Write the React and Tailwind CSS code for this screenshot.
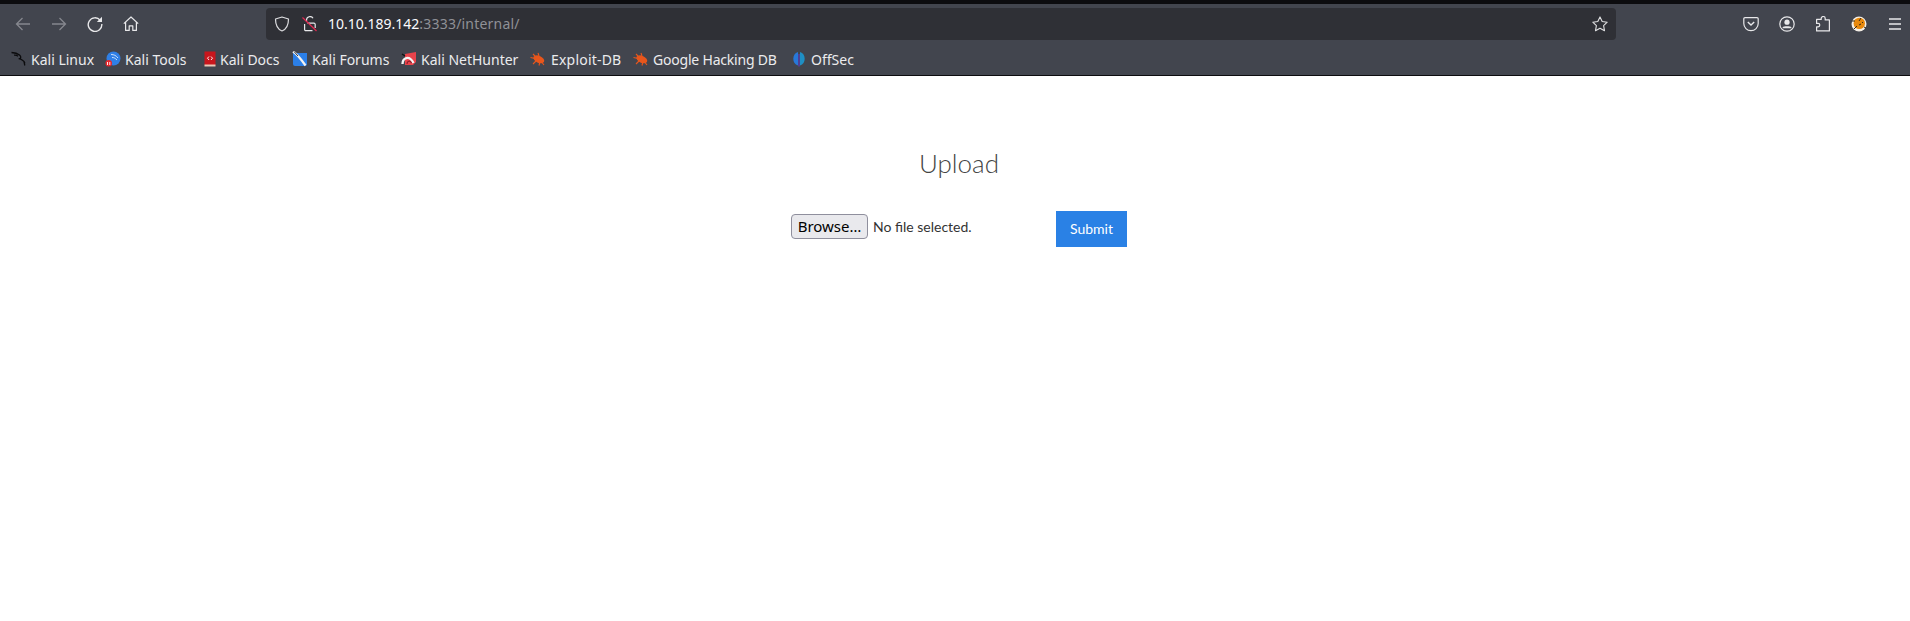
import React from 'react';

function Back({ className }) {
  return (
    <svg width="16" height="16" viewBox="0 0 16 16" fill="none" stroke="currentColor" strokeWidth="1.3" className={className}>
      <path d="M15 8H1.5M7.5 2 1.500 8l6 6" />
    </svg>
  );
}

function Reload() {
  return (
    <svg width="16" height="16" viewBox="0 0 16 16" fill="none" stroke="currentColor" strokeWidth="1.4" className="text-[#e8e8ea]">
      <path d="M13.2 4.2A6.800 6.800 0 1 0 14.800 8" />
      <path d="M15 .8V6h-5.200z" fill="currentColor" stroke="none" />
    </svg>
  );
}

function Home() {
  return (
    <svg width="16" height="16" viewBox="0 0 16 16" fill="none" stroke="currentColor" strokeWidth="1.2" className="text-[#e8e8ea]">
      <path d="M.8 7.600 8 1l7.200 6.600M2.600 6.200v8.200h3.600V9.800h3.600v4.600h3.600V6.200" strokeLinejoin="round" />
    </svg>
  );
}

function Shield() {
  return (
    <svg width="16" height="16" viewBox="0 0 16 16" fill="none" stroke="currentColor" strokeWidth="1.2" className="text-[#dcdcdf]">
      <path d="M8 1 1.500 3c0 6 1.500 10 6.500 12 5-2 6.500-6 6.500-12z" strokeLinejoin="round" />
    </svg>
  );
}

function BrokenLock() {
  return (
    <svg width="16" height="16" viewBox="0 0 16 16" fill="none" className="text-[#e8e8ea]">
      <path d="M4.500 5.500V4a3.500 3.500 0 0 1 6.500-1.700" stroke="currentColor" strokeWidth="1.200" />
      <path d="M5.500 7.200H12a1.200 1.200 0 0 1 1.200 1.200V12M10.500 14.600H3.800a1.200 1.200 0 0 1-1.200-1.200V8" stroke="currentColor" strokeWidth="1.200" />
      <path d="M.5 1.500 14.500 15" stroke="#e22850" strokeWidth="1.200" />
    </svg>
  );
}

function Star() {
  return (
    <svg width="16" height="16" viewBox="0 0 16 16" fill="none" stroke="currentColor" strokeWidth="1.100" className="text-[#e0e0e2]">
      <path d="m8 .9 2.200 4.600 5 .7-3.600 3.500.9 5L8 12.300l-4.500 2.400.9-5L.8 6.200l5-.7z" strokeLinejoin="round" />
    </svg>
  );
}

function Pocket() {
  return (
    <svg width="16" height="16" viewBox="0 0 16 16" fill="none" stroke="currentColor" strokeWidth="1.200" className="text-[#e8e8ea]">
      <path d="M2 1.600h12a1.200 1.200 0 0 1 1.200 1.200v4.700a7.200 7.200 0 0 1-14.400 0V2.800A1.200 1.200 0 0 1 2 1.600z" />
      <path d="m4.800 6 3.200 3.100L11.200 6" strokeWidth="1.400" />
    </svg>
  );
}

function Account() {
  return (
    <svg width="16" height="16" viewBox="0 0 16 16" fill="none" className="text-[#e8e8ea]">
      <circle cx="8" cy="8" r="7.200" stroke="currentColor" strokeWidth="1.200" />
      <circle cx="8" cy="6.200" r="2.600" fill="currentColor" />
      <path d="M3.600 11.200c1-1.400 7.800-1.400 8.800 0v1H3.600z" fill="currentColor" />
    </svg>
  );
}

function Puzzle() {
  return (
    <svg width="16" height="16" viewBox="0 0 16 16" fill="none" stroke="currentColor" strokeWidth="1.200" className="text-[#e8e8ea]">
      <path d="M6.200 3.400V2.500a2 2 0 0 1 4 0v1.400h4.200v11H1.600v-4.100h1.500a1.700 1.700 0 0 0 0-3.400H1.600V3.400z" strokeLinejoin="round" />
    </svg>
  );
}

function Tiger() {
  return (
    <svg width="16" height="16" viewBox="0 0 16 16">
      <circle cx="8" cy="8" r="7.500" fill="#f4efe6" />
      <circle cx="8.300" cy="7.400" r="5.700" fill="#e8890c" />
      <path d="M1 5h3M3 13l3-3M10 2 8 5M8 9l2-1M11 6l1 1M13 11l2 1" stroke="#3a2a12" strokeWidth="1" />
    </svg>
  );
}

function Menu() {
  return (
    <svg width="16" height="16" viewBox="0 0 16 16" stroke="currentColor" strokeWidth="1.300" className="text-[#e8e8ea]">
      <path d="M2 3h12M2 8h12M2 13h12" />
    </svg>
  );
}

function KaliIcon() {
  return (
    <svg width="16" height="16" viewBox="0 0 16 16" fill="none" stroke="#0b0b0d" strokeWidth="1.300">
      <path d="M.5 1.500c3 .2 6 1 8 2.600 2 1.800 1.500 3.600-.8 3.600 2.800.5 5 2 6.300 4.500M3 4.200c1.500-.2 3 .2 4 1M13 10.500l.8 4" />
    </svg>
  );
}

function ToolsIcon() {
  return (
    <svg width="16" height="16" viewBox="0 0 16 16" fill="none">
      <circle cx="8.500" cy="7.500" r="7" fill="#2f7fe6" />
      <path d="M6 3.500c3 0 5 1 7 3.500M7 6.500c2 0 3 .5 5 2.500" stroke="#dbe9fb" strokeWidth=".9" />
      <rect x=".5" y="9" width="6.500" height="6.500" rx="3.200" fill="#e5262b" />
      <path d="M2.500 11v3M4.800 11v3" stroke="#fff" strokeWidth=".9" />
    </svg>
  );
}

function DocsIcon() {
  return (
    <svg width="16" height="16" viewBox="0 0 16 16" fill="none">
      <rect x="2.500" y="0.500" width="11" height="14" fill="#c9161d" />
      <rect x="2.500" y="13.500" width="11" height="2" fill="#e9c9b8" />
      <path d="M7 5.500 5.500 7.200 7 9M9 5.500l1.500 1.700L9 9" stroke="#fff" strokeWidth=".9" />
    </svg>
  );
}

function ForumsIcon() {
  return (
    <svg width="16" height="16" viewBox="0 0 16 16" fill="none">
      <path d="M1 2h14v11a2 2 0 0 1-2 2H3a2 2 0 0 1-2-2z" fill="#2b7fe8" />
      <path d="M1 .5c4 2.500 8 7.500 12.500 14" stroke="#f2f2f2" strokeWidth="2.200" />
      <path d="M2 .5 6 5" stroke="#33363c" strokeWidth="1" />
    </svg>
  );
}

function HunterIcon() {
  return (
    <svg width="16" height="16" viewBox="0 0 16 16" fill="none">
      <path d="M4 3 15 1v10l-3 3H4z" fill="#e8434b" />
      <path d="M1.500 13C1.500 7 8 3.500 12.500 12" stroke="#f3f3f3" strokeWidth="2.400" />
      <path d="M6 13c0-3 3-4 4.500-1" stroke="#8b1f2a" strokeWidth="1.200" />
      <path d="M1 3l3 2" stroke="#111" strokeWidth="1.400" />
    </svg>
  );
}

function BugIcon() {
  return (
    <svg width="16" height="16" viewBox="0 0 16 16" fill="none">
      <ellipse cx="8.800" cy="8.300" rx="5.800" ry="3.400" fill="#e8561c" transform="rotate(25 8.800 8.300)" />
      <path d="M.5 6.500 5 7.500M3 3l3 3M8 2l1 3M3 13l3-3M9 14.500l1-4M14 14l-2-2.500" stroke="#e8561c" strokeWidth="1.100" />
    </svg>
  );
}

function OffSecIcon() {
  return (
    <svg width="16" height="16" viewBox="0 0 16 16" fill="none">
      <path d="M7 1A7.200 7.200 0 0 0 7 14.500z" fill="#2778d8" />
      <path d="M9 1a7.200 7.200 0 0 1 0 13.500z" fill="#1f8fc4" />
      <path d="M8 3v12.500" stroke="#5b3bc4" strokeWidth="1.200" />
    </svg>
  );
}

const bookmarks = [
  { label: 'Kali Linux', icon: <KaliIcon />, item: 'gap-[4px]', text: 'w-[62px]' },
  { label: 'Kali Tools', icon: <ToolsIcon />, item: 'gap-[4px]', text: 'w-[65px]' },
  { label: 'Kali Docs', icon: <DocsIcon />, item: 'gap-[2px]', text: 'w-[60px]' },
  { label: 'Kali Forums', icon: <ForumsIcon />, item: 'gap-[4px]', text: 'w-[77px]' },
  { label: 'Kali NetHunter', icon: <HunterIcon />, item: 'gap-[4px]', text: 'w-[97px]' },
  { label: 'Exploit-DB', icon: <BugIcon />, item: 'gap-[5px]', text: 'w-[70px] tracking-[0.2px]' },
  { label: 'Google Hacking DB', icon: <BugIcon />, item: 'gap-[4px]', text: 'w-[126px] tracking-[-0.2px]' },
  { label: 'OffSec', icon: <OffSecIcon />, item: 'gap-[4px]', text: 'w-[44px]' },
];

export default function App() {
  return (
    <div className='min-h-screen bg-white font-["Noto_Sans",sans-serif]'>
      <div className="h-[4px] bg-[#0c0c0f]" />
      <div className="h-[40px] bg-[#42454e] flex items-center pl-[15px] pr-[7px]">
        <div className="flex items-center gap-[20px] w-[251px]">
          <Back className="text-[#85878e]" />
          <Back className="text-[#85878e] -scale-x-100" />
          <Reload />
          <Home />
        </div>
        <div className="w-[1350px] h-[32px] bg-[#2f3036] rounded-[4px] flex items-center px-[8px]">
          <Shield />
          <div className="ml-[12px]"><BrokenLock /></div>
          <div className="ml-[10px] pb-[1px] text-[14px] text-[#fbfbfe] whitespace-nowrap">
            10.10.189.142<span className="text-[#8f9096] tracking-[0.2px]">:3333/internal/</span>
          </div>
          <div className="ml-auto"><Star /></div>
        </div>
        <div className="ml-auto flex items-center gap-[20px]">
          <Pocket />
          <Account />
          <Puzzle />
          <Tiger />
          <Menu />
        </div>
      </div>
      <div className="h-[32px] bg-[#42454e] border-b border-[#0c0c0f] flex items-center pl-[11px] pb-[1px] gap-[12px] text-[14px] text-[#ebebed]">
        {bookmarks.map((b) => (
          <div key={b.label} className={`flex items-center whitespace-nowrap ${b.item}`}>
            {b.icon}
            <span className={b.text}>{b.label}</span>
          </div>
        ))}
      </div>

      <div className='w-[352px] ml-[783px] pt-[70px] font-["Lato",sans-serif]'>
        <h2 className="text-center text-[26px] leading-[34px] font-light text-[#444]">Upload</h2>
        <form className="mt-[31px] flex items-start justify-between px-[8px]">
          <div className="mt-[3px] flex items-center gap-[5px] text-[14px] text-[#333]">
            <button type="button" className='h-[25px] w-[77px] bg-[#e9e9ed] border border-[#8f8f9d] rounded-[4px] font-["Noto_Sans",sans-serif] text-[15px] text-black'>
              Browse…
            </button>
            <span>No file selected.</span>
          </div>
          <button type="button" className="w-[71px] h-[36px] pb-[1px] bg-[#2a81e5] text-white text-[14px]">Submit</button>
        </form>
      </div>
    </div>
  );
}
